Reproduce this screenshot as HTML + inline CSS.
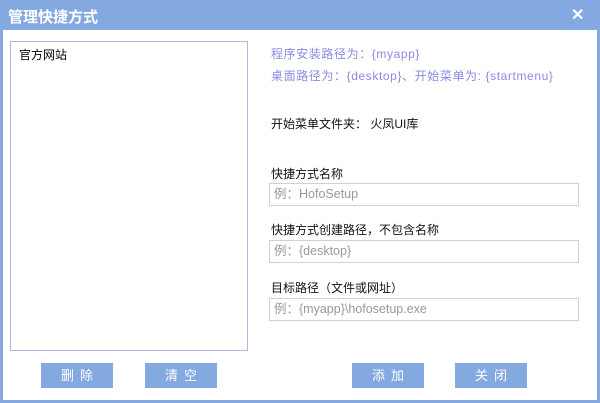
<!DOCTYPE html><html><head><meta charset="utf-8"><style>
body{margin:0;width:600px;height:403px;overflow:hidden;font-family:"Liberation Sans","Noto Sans CJK SC",sans-serif;font-size:12px;}
.win{position:absolute;left:0;top:0;width:600px;height:403px;background:#84a8e0;}
.body{position:absolute;left:3px;top:30px;width:594px;height:370px;background:#fff;}
.title{position:absolute;left:8px;top:6px;color:#fff;font-size:15px;font-weight:bold;}
.x{position:absolute;left:571px;top:5px;color:#fff;font-size:16px;font-weight:bold;}
.list{position:absolute;left:10px;top:41px;width:236px;height:308px;border:1px solid #b9b4dc;}
.t{position:absolute;white-space:nowrap;}
.inp{position:absolute;left:269px;width:308px;height:21px;border:1px solid #c5d3e8;color:#999;line-height:21px;text-indent:4px;font-size:12.5px;}
.btn{position:absolute;top:363px;width:72px;height:25px;background:#84a8e0;color:#fff;text-align:center;line-height:25px;letter-spacing:6px;text-indent:6px;font-size:13px;}
</style></head><body><div class="win">
<div class="title">管理快捷方式</div><div class="x">✕</div>
<div class="body"></div>
<div class="list"><div class="t" style="left:8px;top:4px">官方网站</div></div>
<div class="t" style="left:271px;top:45px;color:#8a8ae0;letter-spacing:0.6px">程序安装路径为：{myapp}</div>
<div class="t" style="left:271px;top:67px;color:#8a8ae0;letter-spacing:0.6px">桌面路径为：{desktop}、开始菜单为: {startmenu}</div>
<div class="t" style="left:271px;top:115px;color:#111">开始菜单文件夹： 火凤UI库</div>
<div class="t" style="left:271px;top:165px;color:#111">快捷方式名称</div>
<div class="inp" style="top:183px">例：HofoSetup</div>
<div class="t" style="left:271px;top:221px;color:#111">快捷方式创建路径，不包含名称</div>
<div class="inp" style="top:240px">例：{desktop}</div>
<div class="t" style="left:271px;top:279px;color:#111">目标路径（文件或网址）</div>
<div class="inp" style="top:298px">例：{myapp}\hofosetup.exe</div>
<div class="btn" style="left:41px">删除</div>
<div class="btn" style="left:145px">清空</div>
<div class="btn" style="left:352px">添加</div>
<div class="btn" style="left:455px">关闭</div>
</div></body></html>
